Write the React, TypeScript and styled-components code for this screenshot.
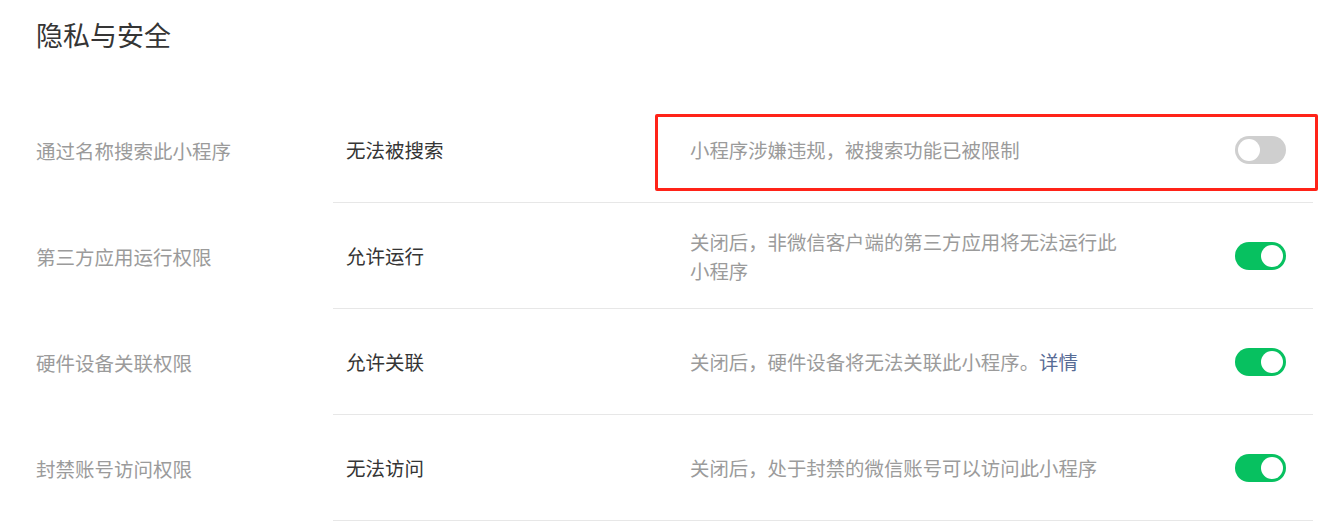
import React from "react";
import styled, { createGlobalStyle } from "styled-components";

const GlobalStyle = createGlobalStyle`
  html, body {
    margin: 0;
    padding: 0;
    background: #ffffff;
  }
  body {
    font-family: "Noto Sans CJK SC", "Noto Sans", sans-serif;
    color: #353535;
  }
`;

const Page = styled.div`
  padding: 17px 16px 0 36px;
`;

Page.displayName = "Page";

const Title = styled.h2`
  margin: 0 0 44px;
  font-size: 27px;
  line-height: 36px;
  font-weight: 400;
  color: #353535;
`;

Title.displayName = "Title";

const Row = styled.div`
  display: flex;
  height: 106px;
`;

Row.displayName = "Row";

const Label = styled.div`
  width: 297px;
  flex-shrink: 0;
  display: flex;
  align-items: center;
  font-size: 19.5px;
  color: #9b9b9b;
`;

Label.displayName = "Label";

const Content = styled.div`
  position: relative;
  flex: 1;
  display: grid;
  grid-template-columns: 344px 1fr auto;
  align-items: center;
  padding: 0 27px 0 13px;
  border-bottom: 1px solid #e7e7e7;
`;

Content.displayName = "Content";

const Value = styled.div`
  font-size: 19.5px;
  color: #353535;
`;

Value.displayName = "Value";

const Desc = styled.div`
  max-width: 434px;
  font-size: 19.4px;
  line-height: 29px;
  color: #9b9b9b;
`;

Desc.displayName = "Desc";

const DetailLink = styled.a`
  color: #576b95;
  text-decoration: none;
  cursor: pointer;
`;

DetailLink.displayName = "DetailLink";

const Track = styled.span<{ $on: boolean }>`
  position: relative;
  display: block;
  width: 51px;
  height: 28px;
  border-radius: 14px;
  background: ${({ $on }) => ($on ? "#07c160" : "#cfcfcf")};
`;

Track.displayName = "Track";

const Knob = styled.span<{ $on: boolean }>`
  position: absolute;
  top: 3px;
  left: ${({ $on }) => ($on ? "26px" : "3px")};
  width: 22px;
  height: 22px;
  border-radius: 50%;
  background: #ffffff;
`;

Knob.displayName = "Knob";

const Highlight = styled.div`
  position: absolute;
  left: 322px;
  right: -5px;
  top: 17px;
  bottom: 11px;
  border: 3px solid #ff2318;
  border-radius: 2px;
  pointer-events: none;
`;

Highlight.displayName = "Highlight";

const Switch: React.FC<{ on: boolean }> = ({ on }) => (
  <Track $on={on}>
    <Knob $on={on} />
  </Track>
);

type Setting = {
  label: string;
  value: string;
  desc: React.ReactNode;
  on: boolean;
  flagged?: boolean;
};

const settings: Setting[] = [
  {
    label: "通过名称搜索此小程序",
    value: "无法被搜索",
    desc: "小程序涉嫌违规，被搜索功能已被限制",
    on: false,
    flagged: true,
  },
  {
    label: "第三方应用运行权限",
    value: "允许运行",
    desc: "关闭后，非微信客户端的第三方应用将无法运行此小程序",
    on: true,
  },
  {
    label: "硬件设备关联权限",
    value: "允许关联",
    desc: (
      <>
        关闭后，硬件设备将无法关联此小程序。<DetailLink>详情</DetailLink>
      </>
    ),
    on: true,
  },
  {
    label: "封禁账号访问权限",
    value: "无法访问",
    desc: "关闭后，处于封禁的微信账号可以访问此小程序",
    on: true,
  },
];

export default function App() {
  return (
    <>
      <GlobalStyle />
      <Page>
        <Title>隐私与安全</Title>
        {settings.map((s) => (
          <Row key={s.label}>
            <Label>{s.label}</Label>
            <Content>
              <Value>{s.value}</Value>
              <Desc>{s.desc}</Desc>
              <Switch on={s.on} />
              {s.flagged && <Highlight />}
            </Content>
          </Row>
        ))}
      </Page>
    </>
  );
}
